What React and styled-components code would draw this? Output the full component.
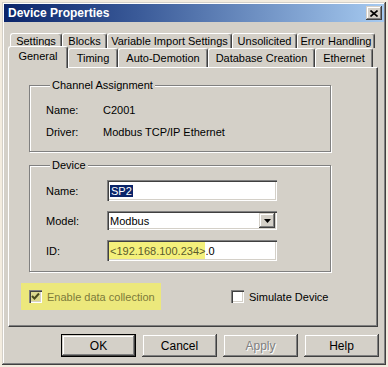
import React from "react";
import styled, { createGlobalStyle } from "styled-components";

const GlobalStyle = createGlobalStyle`
  body {
    margin: 0;
    background: #f3ecdf;
    font-family: "Liberation Sans", Arial, sans-serif;
    font-size: 11px;
    color: #000;
  }
`

const raised = `
  box-shadow: inset -1px -1px 0 #404040, inset 1px 1px 0 #d4d0c8,
    inset -2px -2px 0 #808080, inset 2px 2px 0 #fff;
`
const sunken = `
  box-shadow: inset 1px 1px 0 #808080, inset 2px 2px 0 #404040,
    inset -1px -1px 0 #fff, inset -2px -2px 0 #d4d0c8;
`

const Window = styled.div`
  box-sizing: border-box;
  width: 384px;
  height: 363px;
  margin: 2px 0 0 2px;
  padding: 2px;
  background: #d4d0c8;
  ${raised}
  display: flex;
  flex-direction: column;
`
const TitleBar = styled.div`
  height: 18px;
  display: flex;
  align-items: center;
  justify-content: space-between;
  padding: 0 2px 0 4px;
  background: linear-gradient(to right, #0a246a, #3a5a98 35%, #a6caf0);
`
const Title = styled.span`
  color: #fff;
  font-weight: bold;
  font-size: 12px;
`
const CloseButton = styled.div`
  box-sizing: border-box;
  width: 16px;
  height: 14px;
  background: #d4d0c8;
  ${raised}
  display: flex;
  align-items: center;
  justify-content: center;
`
const Body = styled.div`
  padding: 11px 6px 0 4px;
  display: flex;
  flex-direction: column;
`
const TabRow = styled.div`
  display: flex;
  align-items: flex-end;
  height: ${p => p.$h}px;
  margin-left: ${p => p.$indent}px;
  margin-top: ${p => p.$top}px;
`
const Tab = styled.div`
  box-sizing: border-box;
  width: ${p => p.$w}px;
  height: ${p => (p.$active ? 22 : p.$h)}px;
  margin-bottom: ${p => (p.$active ? -1 : 0)}px;
  padding-bottom: ${p => (p.$active ? 3 : 0)}px;
  position: relative;
  z-index: ${p => (p.$active ? 2 : 1)};
  background: #d4d0c8;
  border-top: 1px solid #fff;
  border-left: 1px solid #fff;
  border-right: 1px solid #404040;
  border-radius: 3px 3px 0 0;
  box-shadow: inset -1px 0 0 #808080;
  display: flex;
  align-items: center;
  justify-content: center;
  white-space: nowrap;
`
const Panel = styled.div`
  box-sizing: border-box;
  height: 260px;
  background: #d4d0c8;
  border-top: 1px solid #fff;
  border-left: 1px solid #fff;
  border-right: 1px solid #404040;
  border-bottom: 1px solid #404040;
  box-shadow: inset -1px -1px 0 #808080;
  padding: 0 0 0 20px;
  display: flex;
  flex-direction: column;
`
const Group = styled.fieldset`
  box-sizing: border-box;
  width: 302px;
  margin: ${p => p.$top}px 0 0 0;
  border: 1px solid #808080;
  box-shadow: 1px 1px 0 #fff, inset 1px 1px 0 #fff;
  padding: ${p => p.$pad};
  min-width: 0;
`
const Legend = styled.legend`
  padding: 0 2px;
  margin-left: 4px;
  background: #d4d0c8;
  line-height: 13px;
  position: relative;
`
const InfoGrid = styled.div`
  display: grid;
  grid-template-columns: 57px 1fr;
  row-gap: 8px;
  line-height: 14px;
`
const FormGrid = styled.div`
  display: grid;
  grid-template-columns: 61px 170px;
  grid-template-rows: 21px 19px 21px;
  row-gap: 10px;
  align-items: center;
`
const Field = styled.div`
  box-sizing: border-box;
  height: ${p => p.$h}px;
  background: #fff;
  ${sunken}
  display: flex;
  align-items: center;
  padding: 0 2px 0 3px;
  white-space: nowrap;
`
const Selected = styled.span`
  background: #0a246a;
  color: #fff;
  padding: 0 1px;
`
const Marked = styled.span`
  background: #f4f07c;
  color: #5a5a2c;
  height: 17px;
  display: flex;
  align-items: center;
  margin-left: -1px;
  padding-left: 1px;
`
const ComboText = styled.span`
  flex: 1;
`
const DropButton = styled.div`
  box-sizing: border-box;
  width: 16px;
  height: 15px;
  background: #d4d0c8;
  ${raised}
  display: flex;
  align-items: center;
  justify-content: center;
`
const CheckRow = styled.div`
  display: grid;
  grid-template-columns: 210px auto;
  align-items: center;
  margin: 11px 0 0 -8px;
`
const Highlight = styled.label`
  box-sizing: border-box;
  width: 140px;
  height: 27px;
  background: #ece87c;
  display: flex;
  align-items: center;
  gap: 5px;
  padding-left: 8px;
  color: #7c7a3a;
  white-space: nowrap;
`
const CheckLabel = styled.label`
  display: flex;
  align-items: center;
  gap: 5px;
  white-space: nowrap;
`
const Box = styled.span`
  box-sizing: border-box;
  width: 13px;
  height: 13px;
  background: ${p => p.$bg};
  ${sunken}
  display: flex;
  align-items: center;
  justify-content: center;
`
const ButtonRow = styled.div`
  display: flex;
  justify-content: flex-end;
  gap: 6px;
  margin-top: 7px;
  margin-right: -1px;
`
const Button = styled.div`
  box-sizing: border-box;
  width: 75px;
  height: 23px;
  background: #d4d0c8;
  ${raised}
  border: ${p => (p.$default ? "1px solid #000" : "none")};
  display: flex;
  align-items: center;
  justify-content: center;
  font-size: 12px;
  color: ${p => (p.$disabled ? "#808080" : "#000")};
  text-shadow: ${p => (p.$disabled ? "1px 1px 0 #fff" : "none")};
`

const topTabs = [
  ["Settings", 52],
  ["Blocks", 45],
  ["Variable Import Settings", 125],
  ["Unsolicited", 65],
  ["Error Handling", 78],
]
const bottomTabs = [
  ["General", 60],
  ["Timing", 50],
  ["Auto-Demotion", 90],
  ["Database Creation", 107],
  ["Ethernet", 58],
]

const Check = ({ color }) => (
  <svg width="9" height="9" viewBox="0 0 9 9">
    <path d="M1 4 L3.5 6.5 L8 1.5" fill="none" stroke={color} strokeWidth="2" />
  </svg>
)

export default function App() {
  return (
    <>
      <GlobalStyle />
      <Window>
        <TitleBar>
          <Title>Device Properties</Title>
          <CloseButton>
            <svg width="8" height="7" viewBox="0 0 8 7">
              <path d="M0.5 0.5 L7.5 6.5 M7.5 0.5 L0.5 6.5" stroke="#000" strokeWidth="1.6" />
            </svg>
          </CloseButton>
        </TitleBar>
        <Body>
          <TabRow $h={15} $indent={2} $top={0}>
            {topTabs.map(([t, w]) => (
              <Tab key={t} $w={w} $h={15}>{t}</Tab>
            ))}
          </TabRow>
          <TabRow $h={21} $indent={0} $top={-2}>
            {bottomTabs.map(([t, w], i) => (
              <Tab key={t} $w={w} $h={19} $active={i === 0}>{t}</Tab>
            ))}
          </TabRow>
          <Panel>
            <Group $top={11} $pad="11px 0 12px 16px">
              <Legend>Channel Assignment</Legend>
              <InfoGrid>
                <span>Name:</span>
                <span>C2001</span>
                <span>Driver:</span>
                <span>Modbus TCP/IP Ethernet</span>
              </InfoGrid>
            </Group>
            <Group $top={7} $pad="8px 0 10px 16px">
              <Legend>Device</Legend>
              <FormGrid>
                <span>Name:</span>
                <Field $h={21}><Selected>SP2</Selected></Field>
                <span>Model:</span>
                <Field $h={19}>
                  <ComboText>Modbus</ComboText>
                  <DropButton>
                    <svg width="7" height="4" viewBox="0 0 7 4">
                      <path d="M0 0 H7 L3.5 4 Z" fill="#000" />
                    </svg>
                  </DropButton>
                </Field>
                <span>ID:</span>
                <Field $h={21}>
                  <Marked>&lt;192.168.100.234&gt;</Marked>.0
                </Field>
              </FormGrid>
            </Group>
            <CheckRow>
              <Highlight>
                <Box $bg="#dcd88e"><Check color="#4a4a1c" /></Box>
                Enable data collection
              </Highlight>
              <CheckLabel>
                <Box $bg="#fff" />
                Simulate Device
              </CheckLabel>
            </CheckRow>
          </Panel>
          <ButtonRow>
            <Button $default>OK</Button>
            <Button>Cancel</Button>
            <Button $disabled>Apply</Button>
            <Button>Help</Button>
          </ButtonRow>
        </Body>
      </Window>
    </>
  )
}
